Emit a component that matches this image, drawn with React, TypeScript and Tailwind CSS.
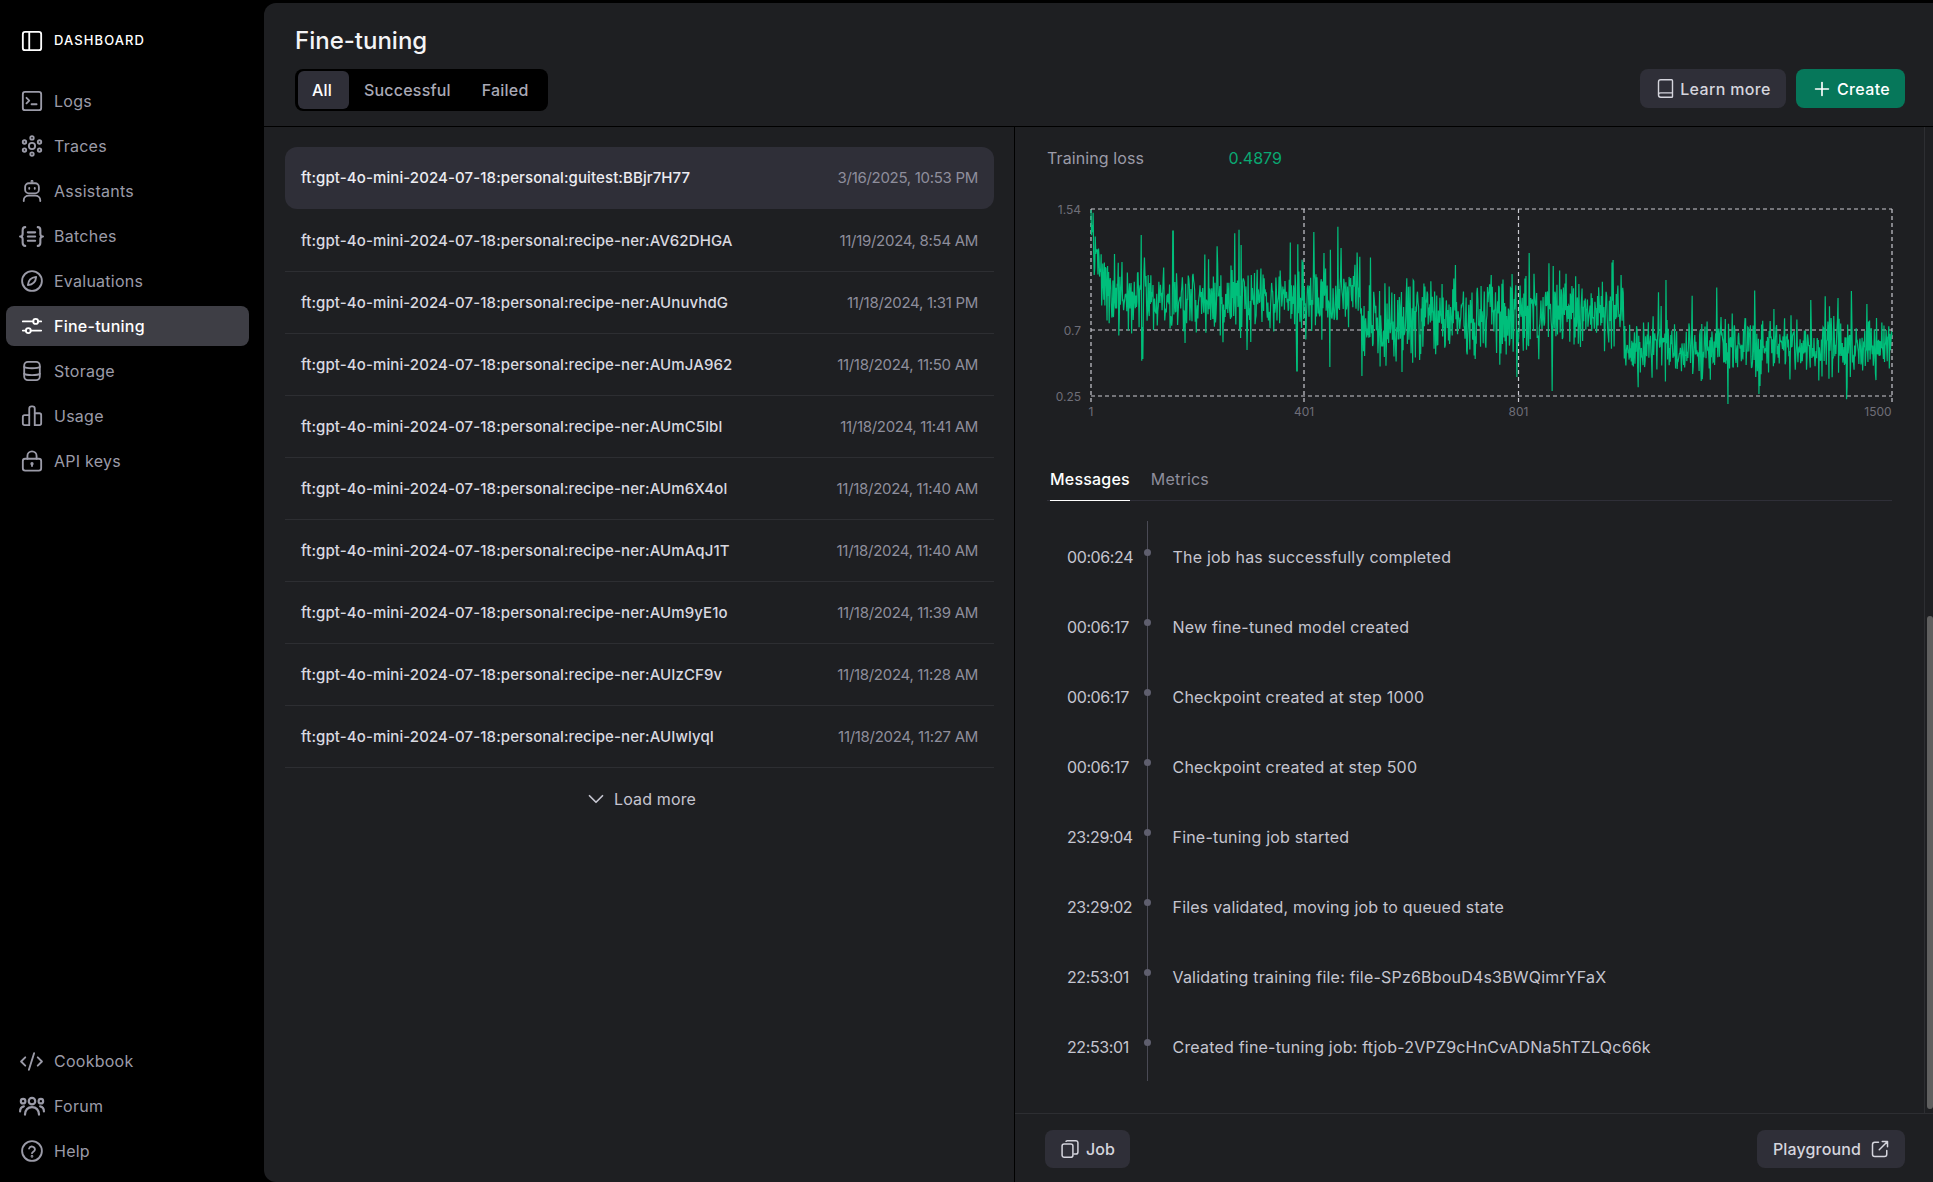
import { Book, ChevronDown, CodeXml, Plus } from "lucide-react";
import type { ReactNode } from "react";

const Ico = ({ children, size = 22 }: { children: ReactNode; size?: number }) => (
  <svg
    width={size}
    height={size}
    viewBox="0 0 24 24"
    fill="none"
    stroke="currentColor"
    strokeWidth={2}
    strokeLinecap="round"
    strokeLinejoin="round"
  >
    {children}
  </svg>
);

const icons: Record<string, ReactNode> = {
  Logs: (
    <Ico>
      <rect x="2" y="2" width="20" height="20" rx="2.5" />
      <path d="M6 8.500l3 3-3 3M11.500 15.500h5.500" />
    </Ico>
  ),
  Traces: (
    <Ico>
      <circle cx="12" cy="12" r="3.400" />
      <circle cx="12" cy="3.200" r="1.900" />
      <circle cx="12" cy="20.800" r="1.900" />
      <circle cx="3.800" cy="7.600" r="1.900" />
      <circle cx="20.200" cy="7.600" r="1.900" />
      <circle cx="3.800" cy="16.400" r="1.900" />
      <circle cx="20.200" cy="16.400" r="1.900" />
    </Ico>
  ),
  Assistants: (
    <Ico>
      <rect x="4.500" y="3.500" width="15" height="11" rx="4" />
      <path d="M3 23v-1c0-3 2.500-5 5.500-5h7c3 0 5.500 2 5.500 5v1" />
      <circle cx="12" cy="1.500" r=".6" />
      <path d="M9 8.500v1M15 8.500v1" />
    </Ico>
  ),
  Batches: (
    <Ico size={25}>
      <path d="M6 3C4 3 3.500 4 3.500 6v3.500C3.500 11 2.500 12 1 12c1.500 0 2.500 1 2.500 2.500V18c0 2 .5 3 2.500 3" />
      <path d="M18 3c2 0 2.500 1 2.500 3v3.500C20.500 11 21.500 12 23 12c-1.500 0-2.500 1-2.500 2.500V18c0 2-.5 3-2.500 3" />
      <path d="M8.500 8h7M8.500 12h7M8.500 16h7" />
    </Ico>
  ),
  Evaluations: (
    <Ico>
      <circle cx="12" cy="12" r="10.800" />
      <path d="M16.500 7.500c-.3 4.800-3.600 8.400-9 9 .3-4.800 3.600-8.400 9-9z" />
    </Ico>
  ),
  "Fine-tuning": (
    <Ico>
      <path d="M2 7h11.500M18.500 7h3.500M2 17h3.500M10.500 17h11.500" />
      <circle cx="16" cy="7" r="2.700" />
      <circle cx="8" cy="17" r="2.700" />
    </Ico>
  ),
  Storage: (
    <Ico>
      <rect x="3.500" y="2" width="17" height="20" rx="4" />
      <path d="M3.500 7.500c2 2 15 2 17 0M3.500 15c2 2 15 2 17 0" />
    </Ico>
  ),
  Usage: (
    <Ico>
      <path d="M9 22V4a2.500 2.500 0 0 1 2.500-2.500h1A2.500 2.500 0 0 1 15 4v18" />
      <path d="M9 22H4a2 2 0 0 1-2-2v-7a2 2 0 0 1 2-2h5M15 22h5a2 2 0 0 0 2-2v-9a2 2 0 0 0-2-2h-5" />
    </Ico>
  ),
  "API keys": (
    <Ico>
      <rect x="2" y="9.500" width="20" height="13" rx="2.500" />
      <path d="M7 9.500V6.500a5 5 0 0 1 10 0v3" />
      <path d="M12 15v2.500" />
      <circle cx="12" cy="15" r=".8" />
    </Ico>
  ),
  Cookbook: <CodeXml size={25} strokeWidth={1.8} />,
  Forum: (
    <Ico size={26}>
      <circle cx="12" cy="7.500" r="3" />
      <circle cx="3.800" cy="7.500" r="2.100" />
      <circle cx="20.200" cy="7.500" r="2.100" />
      <path d="M5.500 20c.3-4.500 2.800-7 6.500-7s6.200 2.500 6.500 7" />
      <path d="M1 17c0-2.500 1.500-4.300 3.500-4.700M23 17c0-2.500-1.500-4.300-3.500-4.700" />
    </Ico>
  ),
  Help: (
    <Ico>
      <circle cx="12" cy="12" r="10.800" />
      <path d="M8.800 9.300a3.300 3.300 0 0 1 6.400 1c0 2.200-3.200 2.500-3.200 4.200" />
      <circle cx="12" cy="17.800" r=".5" />
    </Ico>
  ),
};

const topNav = ["Logs", "Traces", "Assistants", "Batches", "Evaluations", "Fine-tuning", "Storage", "Usage", "API keys"];
const bottomNav = ["Cookbook", "Forum", "Help"];

const NavItem = ({ label }: { label: string }) => {
  const active = label === "Fine-tuning";
  return (
    <div
      className={`flex h-[40px] items-center rounded-lg ${active ? "bg-[#3e3e45] font-medium text-white" : "text-[#9b9ba8]"}`}
    >
      <span className="flex w-[48px] shrink-0 justify-center pl-[3px]">{icons[label]}</span>
      <span className="text-[16px] tracking-[0.25px]">{label}</span>
    </div>
  );
};

const jobs = [
  ["ft:gpt-4o-mini-2024-07-18:personal:guitest:BBjr7H77", "3/16/2025, 10:53 PM"],
  ["ft:gpt-4o-mini-2024-07-18:personal:recipe-ner:AV62DHGA", "11/19/2024, 8:54 AM"],
  ["ft:gpt-4o-mini-2024-07-18:personal:recipe-ner:AUnuvhdG", "11/18/2024, 1:31 PM"],
  ["ft:gpt-4o-mini-2024-07-18:personal:recipe-ner:AUmJA962", "11/18/2024, 11:50 AM"],
  ["ft:gpt-4o-mini-2024-07-18:personal:recipe-ner:AUmC5lbl", "11/18/2024, 11:41 AM"],
  ["ft:gpt-4o-mini-2024-07-18:personal:recipe-ner:AUm6X4ol", "11/18/2024, 11:40 AM"],
  ["ft:gpt-4o-mini-2024-07-18:personal:recipe-ner:AUmAqJ1T", "11/18/2024, 11:40 AM"],
  ["ft:gpt-4o-mini-2024-07-18:personal:recipe-ner:AUm9yE1o", "11/18/2024, 11:39 AM"],
  ["ft:gpt-4o-mini-2024-07-18:personal:recipe-ner:AUIzCF9v", "11/18/2024, 11:28 AM"],
  ["ft:gpt-4o-mini-2024-07-18:personal:recipe-ner:AUIwlyqI", "11/18/2024, 11:27 AM"],
];

const messages = [
  ["00:06:24", "The job has successfully completed"],
  ["00:06:17", "New fine-tuned model created"],
  ["00:06:17", "Checkpoint created at step 1000"],
  ["00:06:17", "Checkpoint created at step 500"],
  ["23:29:04", "Fine-tuning job started"],
  ["23:29:02", "Files validated, moving job to queued state"],
  ["22:53:01", "Validating training file: file-SPz6BbouD4s3BWQimrYFaX"],
  ["22:53:01", "Created fine-tuning job: ftjob-2VPZ9cHnCvADNa5hTZLQc66k"],
];

// spikes read off the reference chart, as [x, y] on the page
const spikes: [number, number][] = [
  [1173, 231], [1241, 245], [1314, 232], [1341, 248], [1529, 253], [1613, 260], [1666, 280], [1838, 298],
  [1143, 359], [1297, 371], [1330, 367], [1402, 372], [1517, 377], [1552, 391], [1759, 394], [1847, 387], [1760, 386],
];

function lossPath() {
  let seed = 1234567;
  const rnd = () => {
    seed = (seed * 1103515245 + 12345) & 0x7fffffff;
    return seed / 0x7fffffff;
  };
  const x0 = 1091;
  const x1 = 1892;
  const pts: string[] = [];
  for (let i = 0; i < 1500; i++) {
    const x = x0 + ((x1 - x0) * i) / 1499;
    let mid = 348;
    if (x < 1360) mid = 299;
    else if (x < 1530) mid = 320 + Math.sin(x / 30) * 3;
    else if (x < 1625) mid = 312;
    if (x < 1110) mid += (1 - (x - x0) / 19) * -65;
    const band = x < 1360 ? 19 : x < 1625 ? 20 : 15;
    let y = mid + (rnd() + rnd() + rnd() - 1.5) * band * 1.8;
    const r = rnd();
    if (r < 0.05) y -= 18 + rnd() * 22;
    else if (r < 0.08) y += 15 + rnd() * 18;
    if (i === 0) y = 210;
    const hit = spikes.find((s) => Math.abs(s[0] - x) < 0.3);
    if (hit) y = hit[1];
    pts.push(`${x.toFixed(2)} ${y.toFixed(1)}`);
  }
  return "M" + pts.join("L");
}

const LossChart = () => (
  <svg width={860} height={225} viewBox="1047 195 860 225" className="mt-[25px] block">
    <g stroke="#c9c9d0" strokeWidth={1.2} strokeDasharray="4 3" fill="none">
      <path d="M1091 209H1892M1091 330H1892M1091 396H1892" />
      <path d="M1091 209V402M1304 209V402M1518.500 209V402M1892 209V402" />
    </g>
    <path d={lossPath()} stroke="#00bf7b" strokeWidth={1.2} fill="none" />
    <g fill="#6e6e78" fontSize={12} textAnchor="end">
      <text x={1081} y={213.500}>1.54</text>
      <text x={1081} y={334.500}>0.7</text>
      <text x={1081} y={400.500}>0.25</text>
    </g>
    <g fill="#6e6e78" fontSize={12} textAnchor="middle">
      <text x={1091} y={415.500}>1</text>
      <text x={1304} y={415.500}>401</text>
      <text x={1518.500} y={415.500}>801</text>
      <text x={1878} y={415.500}>1500</text>
    </g>
  </svg>
);

export default function App() {
  return (
    <div className="flex h-[1182px] w-[1933px] overflow-hidden bg-black font-['Inter',sans-serif]">
      <aside className="flex w-[264px] shrink-0 flex-col pb-[11px] pl-[6px] pr-[15px] pt-[21px]">
        <div className="flex h-[40px] items-center text-white">
          <span className="flex w-[48px] justify-center pl-[3px]">
            <Ico>
              <rect x="2" y="2" width="20" height="20" rx="2.500" />
              <path d="M9 2v20" />
            </Ico>
          </span>
          <span className="text-[13px] font-medium tracking-[1.1px]">DASHBOARD</span>
        </div>
        <nav className="mt-[20px] flex flex-col gap-[5px]">
          {topNav.map((l) => (
            <NavItem key={l} label={l} />
          ))}
        </nav>
        <nav className="mt-auto flex flex-col gap-[5px]">
          {bottomNav.map((l) => (
            <NavItem key={l} label={l} />
          ))}
        </nav>
      </aside>

      <main className="mt-[3px] flex min-w-0 flex-1 flex-col rounded-l-[12px] bg-[#1e1f22]">
        <header className="flex h-[124px] shrink-0 items-end justify-between border-b border-black pb-[15px] pl-[31px] pr-[28px]">
          <div>
            <h1 className="text-[24px] font-medium leading-[32px] text-[#f4f4f6]">Fine-tuning</h1>
            <div className="mt-[12px] flex h-[42px] items-center rounded-[8px] bg-black p-[3px] text-[16px] font-medium tracking-[0.2px]">
              <span className="flex h-[38px] w-[51px] items-center justify-center rounded-[6px] bg-[#2f2f38] pr-[3px] text-white">All</span>
              <span className="px-[15px] text-[#a9a9b6]">Successful</span>
              <span className="pl-[16px] pr-[16px] text-[#a9a9b6]">Failed</span>
            </div>
          </div>
          <div className="flex gap-[10px] pb-[3px] text-[16px] font-medium tracking-[0.35px]">
            <button className="flex h-[39px] w-[146px] items-center justify-center gap-[4px] rounded-[8px] bg-[#2f2f38] text-[#d5d5dd]">
              <Book size={21} strokeWidth={1.6} />
              Learn more
            </button>
            <button className="flex h-[39px] w-[109px] items-center justify-center gap-[4px] rounded-[8px] bg-[#06775a] text-white">
              <Plus size={22} strokeWidth={1.8} />
              Create
            </button>
          </div>
        </header>

        <div className="flex min-h-0 flex-1">
          <section className="w-[751px] shrink-0 border-r border-black pl-[21px] pr-[20px] pt-[20px]">
            {jobs.map(([name, date], i) => (
              <div
                key={name}
                className={
                  i === 0
                    ? "mb-px flex h-[62px] items-center justify-between rounded-[12px] bg-[#2f2f38] px-[16px]"
                    : "flex h-[62px] items-center justify-between border-b border-[#2d2e32] px-[16px] pt-px"
                }
              >
                <span className={`text-[15px] font-medium tracking-[0.1px] ${i === 0 ? "text-[#ececf1]" : "text-[#d9d9e0]"}`}>{name}</span>
                <span className="text-[15px] tracking-[-0.3px] text-[#8e8e9c]">{date}</span>
              </div>
            ))}
            <div className="flex h-[62px] items-center justify-center gap-[5px] text-[16px] tracking-[0.15px] text-[#c5c5d0]">
              <ChevronDown size={26} strokeWidth={1.6} />
              Load more
            </div>
          </section>

          <section className="flex min-w-0 flex-1 flex-col">
            <div className="flex min-h-0 flex-1 border-b border-[#2d2e32]">
              <div className="min-w-0 flex-1 overflow-hidden pl-[32px] pt-[19px]">
                <div className="flex h-[24px] items-center text-[16px]">
                  <span className="w-[181.500px] tracking-[0.1px] text-[#9b9ba8]">Training loss</span>
                  <span className="text-[#0aa872]">0.4879</span>
                </div>
                <LossChart />
                <div className="mr-[32px] mt-[37px] flex h-[44px] items-end gap-[21px] border-b border-[#2f2f38] pl-[3px] text-[16px] tracking-[0.2px]">
                  <span className="-mb-px flex h-[44px] items-center border-b border-white font-medium text-white">Messages</span>
                  <span className="flex h-[43px] items-center text-[#8e8e9c]">Metrics</span>
                </div>
                <div className="mt-[20px] flex flex-col">
                  {messages.map(([time, text], i) => (
                    <div key={i} className="flex h-[70px] items-center text-[16px]">
                      <span className="box-content w-[79.500px] pl-[20px] pt-[2px] tracking-[-0.4px] text-[#c5c5d0]">{time}</span>
                      <span className="relative w-px self-stretch bg-[#4a4a55]">
                        <span className="absolute left-[-3px] top-[28px] h-[7px] w-[7px] rounded-full bg-[#5f5f6e]" />
                      </span>
                      <span className="ml-[25px] pt-[2px] tracking-[0.2px] text-[#c5c5d0]">{text}</span>
                    </div>
                  ))}
                </div>
              </div>
              <div className="flex w-[9px] shrink-0 flex-col border-l border-[#2d2e32] pl-[2px]">
                <div className="h-[489px] shrink-0" />
                <div className="h-[493px] rounded-[3px] bg-[#5f5f5f]" />
              </div>
            </div>
            <footer className="flex h-[68px] shrink-0 items-start justify-between pl-[30px] pr-[28px] pt-[16px] text-[16px] font-medium tracking-[0.15px] text-[#d5d5dd]">
              <button className="flex h-[38px] w-[85px] items-center justify-center gap-[6px] rounded-[8px] bg-[#2f2f38]">
                <svg width={20} height={20} viewBox="0 0 24 24" fill="none" stroke="currentColor" strokeWidth={1.800} strokeLinejoin="round">
                  <rect x="2.500" y="6" width="13" height="16" rx="2.500" />
                  <path d="M7 3.500A1.800 1.800 0 0 1 9 2h10a2.500 2.500 0 0 1 2.500 2.500v11a2.500 2.500 0 0 1-2.500 2.500h-3" />
                </svg>
                Job
              </button>
              <button className="flex h-[38px] w-[148px] items-center justify-center gap-[10px] rounded-[8px] bg-[#2f2f38]">
                Playground
                <svg width={18} height={18} viewBox="0 0 24 24" fill="none" stroke="currentColor" strokeWidth={2} strokeLinecap="round" strokeLinejoin="round">
                  <path d="M10 3H5a3 3 0 0 0-3 3v13a3 3 0 0 0 3 3h13a3 3 0 0 0 3-3v-5" />
                  <path d="M15 2h7v7M22 2 11 13" />
                </svg>
              </button>
            </footer>
          </section>
        </div>
      </main>
    </div>
  );
}
